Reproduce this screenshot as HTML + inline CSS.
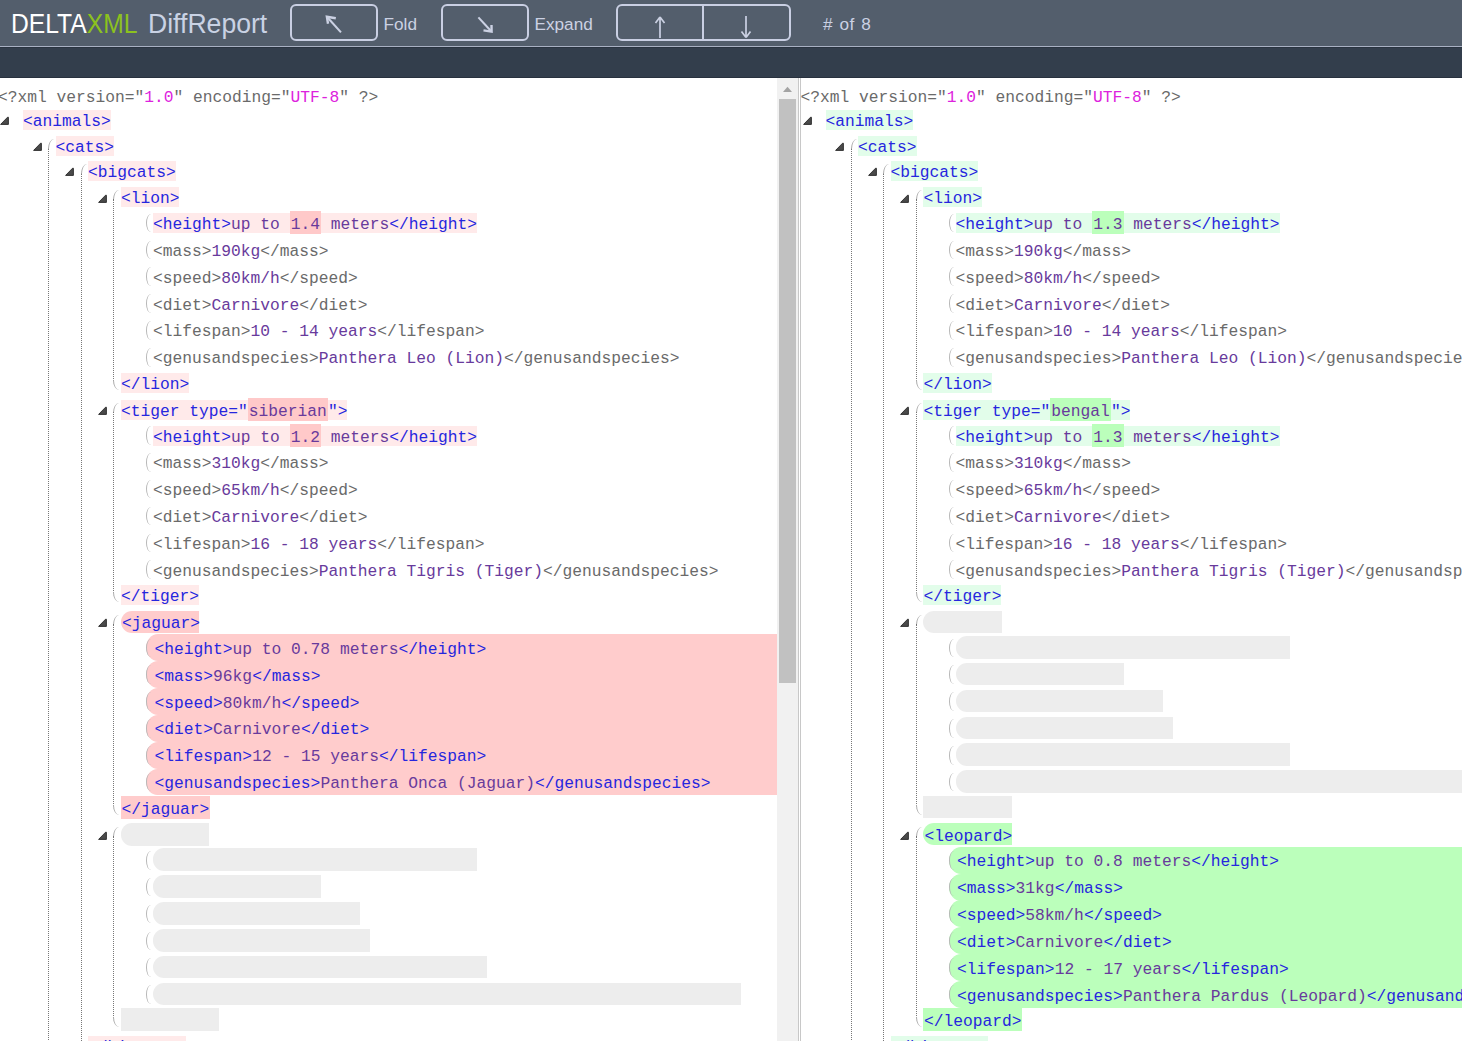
<!DOCTYPE html>
<html><head><meta charset="utf-8"><style>
html,body{margin:0;padding:0;background:#fff;}
body{width:1462px;height:1041px;overflow:hidden;position:relative;}
.hdr{position:absolute;left:0;top:0;width:1462px;height:46px;background:#535e6c;}
.hl{position:absolute;left:0;top:45.5px;width:1462px;height:1.3px;background:#a9b1c3;}
.bar{position:absolute;left:0;top:47px;width:1462px;height:31px;background:#333e4c;border-top:0.8px solid #2a3441;border-bottom:0.8px solid #28313e;box-sizing:border-box;}
.logo{position:absolute;font-family:"Liberation Sans",sans-serif;line-height:normal;white-space:pre;}
.btn{position:absolute;top:4px;height:37px;border:2px solid #c9cfe3;border-radius:6px;box-sizing:border-box;}
.lbl{position:absolute;top:14.3px;font-family:"Liberation Sans",sans-serif;font-size:17.2px;line-height:normal;color:#cbd1e3;white-space:pre;}
.pane{position:absolute;top:78px;height:963px;overflow:hidden;}
.r{position:absolute;}
.t{position:absolute;height:19.6px;line-height:23.05px;white-space:pre;font-family:"Liberation Mono",monospace;font-size:16.25px;color:#6a6a6a;}
.g{color:#6a6a6a}.b{color:#2626de}.p{color:#683a9c}.m{color:#dd22dd}
.hv{padding:0 1.15px;}
.tri{position:absolute;overflow:visible;}
.vl{position:absolute;width:0;border-left:1px dotted #777;}
.arc{position:absolute;width:5px;border-left:1px solid #b8b8b8;border-radius:5px 0 0 5px/9.25px 0 0 9.25px;box-sizing:border-box;}
.ptop{position:absolute;width:6px;height:10px;border-left:1px solid #a8a8a8;border-radius:6px 0 0 0/10px 0 0 0;box-sizing:border-box;}
.pbot{position:absolute;width:6px;height:10px;border-left:1px solid #a8a8a8;border-radius:0 0 0 6px/0 0 0 10px;box-sizing:border-box;}
</style></head><body>

<div class="hdr"></div><div class="hl"></div><div class="bar"></div>
<div class="logo" style="left:11px;top:8.81px;font-size:27.0px;transform:scaleX(0.913);transform-origin:0 0"><span style="color:#fff">DELTA</span><span style="color:#8cc21e">XML</span></div>
<div class="logo" style="left:147.5px;top:8.81px;font-size:27.0px;transform:scaleX(0.985);transform-origin:0 0;color:#c9d2e4">DiffReport</div>
<div class="btn" style="left:290px;width:88px"></div>
<svg style="position:absolute;left:324px;top:12px" width="20" height="22" viewBox="0 0 20 22"><path d="M3.3 5.2 L17 20.4" stroke="#cbd1e3" stroke-width="2.1" fill="none"/><path d="M11.8 6.3 L2.9 4.8 L4 11.8" stroke="#cbd1e3" stroke-width="2.4" fill="none" stroke-linejoin="miter"/></svg>
<div class="lbl" style="left:383.5px">Fold</div>
<div class="btn" style="left:441px;width:88px"></div>
<svg style="position:absolute;left:475px;top:12px" width="20" height="22" viewBox="0 0 20 22"><path d="M3.4 5.4 L16.2 19.2" stroke="#cbd1e3" stroke-width="2.1" fill="none"/><path d="M16.5 13 L16.6 19.6 L8.5 18.4" stroke="#cbd1e3" stroke-width="2.4" fill="none" stroke-linejoin="miter"/></svg>
<div class="lbl" style="left:534.5px">Expand</div>
<div class="btn" style="left:616px;width:175px"></div>
<div style="position:absolute;left:702px;top:5px;width:2px;height:35px;background:#c9cfe3"></div>
<svg style="position:absolute;left:650px;top:14px" width="20" height="26" viewBox="0 0 20 26"><path d="M10 3 L10 24 M10 3 L5.5 9 M10 3 L14.5 9" stroke="#cbd1e3" stroke-width="1.7" fill="none"/></svg>
<svg style="position:absolute;left:736px;top:14px" width="20" height="26" viewBox="0 0 20 26"><path d="M10 2 L10 23.5 M10 23.5 L5.5 17.5 M10 23.5 L14.5 17.5" stroke="#cbd1e3" stroke-width="1.7" fill="none"/></svg>
<div class="lbl" style="left:823px;word-spacing:1.6px;letter-spacing:0.3px"># of 8</div>

<div class="pane" style="left:0px;width:777px"><div style="position:absolute;left:0px;top:-78px;width:1462px;height:1041px"><div class="r" style="left:23.1px;top:109.95px;width:87.75px;height:20px;background:#ffeaea;"></div><div class="r" style="left:55.6px;top:136.2px;width:58.5px;height:20px;background:#ffeaea;"></div><div class="r" style="left:88.1px;top:161.25px;width:87.75px;height:20px;background:#ffeaea;"></div><div class="r" style="left:120.9px;top:187.43px;width:58.5px;height:20px;background:#ffeaea;"></div><div class="r" style="left:153px;top:213.12px;width:324.05px;height:20px;background:#ffeaea;"></div><div class="r" style="left:289.5px;top:211.12px;width:31.55px;height:23px;background:#ffc9c9;"></div><div class="r" style="left:120.9px;top:373.01px;width:68.25px;height:20px;background:#ffeaea;"></div><div class="r" style="left:120.9px;top:399.85px;width:226.55px;height:20px;background:#ffeaea;"></div><div class="r" style="left:247.65px;top:397.85px;width:80.3px;height:23px;background:#ffc9c9;"></div><div class="r" style="left:153px;top:425.54px;width:324.05px;height:20px;background:#ffeaea;"></div><div class="r" style="left:289.5px;top:423.54px;width:31.55px;height:23px;background:#ffc9c9;"></div><div class="r" style="left:120.9px;top:585.43px;width:78px;height:20px;background:#ffeaea;"></div><div class="r" style="left:120.9px;top:610.77px;width:78.5px;height:22.2px;background:#ffcccc;border-radius:11px 0 0 11px;"></div><div class="r" style="left:146.1px;top:634.36px;width:630.9px;height:26.9px;background:#ffcccc;border-radius:12px 0 0 12px/13.5px 0 0 13.5px;"></div><div class="r" style="left:146.1px;top:661.2px;width:630.9px;height:26.9px;background:#ffcccc;border-radius:12px 0 0 12px/13.5px 0 0 13.5px;"></div><div class="r" style="left:146.1px;top:688.04px;width:630.9px;height:26.9px;background:#ffcccc;border-radius:12px 0 0 12px/13.5px 0 0 13.5px;"></div><div class="r" style="left:146.1px;top:714.88px;width:630.9px;height:26.9px;background:#ffcccc;border-radius:12px 0 0 12px/13.5px 0 0 13.5px;"></div><div class="r" style="left:146.1px;top:741.72px;width:630.9px;height:26.9px;background:#ffcccc;border-radius:12px 0 0 12px/13.5px 0 0 13.5px;"></div><div class="r" style="left:146.1px;top:768.56px;width:630.9px;height:26.9px;background:#ffcccc;border-radius:12px 0 0 12px/13.5px 0 0 13.5px;"></div><div class="r" style="left:120.9px;top:795.85px;width:88.75px;height:23px;background:#ffcccc;"></div><div class="r" style="left:120.7px;top:823.09px;width:88.75px;height:22.6px;background:#ededed;border-radius:11px 0 0 11px;"></div><div class="r" style="left:153.4px;top:848.48px;width:324.05px;height:22.5px;background:#ededed;border-radius:11px 0 0 11px;"></div><div class="r" style="left:153.4px;top:875.32px;width:168.05px;height:22.5px;background:#ededed;border-radius:11px 0 0 11px;"></div><div class="r" style="left:153.4px;top:902.16px;width:207.05px;height:22.5px;background:#ededed;border-radius:11px 0 0 11px;"></div><div class="r" style="left:153.4px;top:929px;width:216.8px;height:22.5px;background:#ededed;border-radius:11px 0 0 11px;"></div><div class="r" style="left:153.4px;top:955.84px;width:333.8px;height:22.5px;background:#ededed;border-radius:11px 0 0 11px;"></div><div class="r" style="left:153.4px;top:982.68px;width:587.3px;height:22.5px;background:#ededed;border-radius:11px 0 0 11px;"></div><div class="r" style="left:120.8px;top:1008.27px;width:98.3px;height:22.4px;background:#ededed;"></div><div class="r" style="left:88.1px;top:1035.77px;width:97.5px;height:20px;background:#ffeaea;"></div><svg class="tri" style="left:0.1px;top:116.15px" width="9" height="9" viewBox="0 0 9 9"><path d="M0.6 8.4 L7.6 1.2 Q8.4 0.6 8.4 1.6 L8.4 8.4 Z" fill="#4a4a4a" stroke="#262626" stroke-width="0.9" stroke-linejoin="round"/></svg><svg class="tri" style="left:32.6px;top:142.4px" width="9" height="9" viewBox="0 0 9 9"><path d="M0.6 8.4 L7.6 1.2 Q8.4 0.6 8.4 1.6 L8.4 8.4 Z" fill="#4a4a4a" stroke="#262626" stroke-width="0.9" stroke-linejoin="round"/></svg><svg class="tri" style="left:65.1px;top:167.45px" width="9" height="9" viewBox="0 0 9 9"><path d="M0.6 8.4 L7.6 1.2 Q8.4 0.6 8.4 1.6 L8.4 8.4 Z" fill="#4a4a4a" stroke="#262626" stroke-width="0.9" stroke-linejoin="round"/></svg><div class="vl" style="left:48.2px;top:147.9px;height:1100px"></div><div class="vl" style="left:80.7px;top:172.95px;height:1100px"></div><div class="ptop" style="left:48.2px;top:138.9px"></div><div class="ptop" style="left:80.7px;top:163.95px"></div><svg class="tri" style="left:97.9px;top:193.63px" width="9" height="9" viewBox="0 0 9 9"><path d="M0.6 8.4 L7.6 1.2 Q8.4 0.6 8.4 1.6 L8.4 8.4 Z" fill="#4a4a4a" stroke="#262626" stroke-width="0.9" stroke-linejoin="round"/></svg><div class="arc" style="left:146.2px;top:213.72px;height:18.6px"></div><div class="arc" style="left:146.2px;top:240.56px;height:18.6px"></div><div class="arc" style="left:146.2px;top:267.4px;height:18.6px"></div><div class="arc" style="left:146.2px;top:294.24px;height:18.6px"></div><div class="arc" style="left:146.2px;top:321.08px;height:18.6px"></div><div class="arc" style="left:146.2px;top:347.92px;height:18.6px"></div><div class="ptop" style="left:113px;top:190.13px"></div><div class="vl" style="left:113px;top:199.13px;height:181.68px"></div><div class="pbot" style="left:113px;top:379.81px"></div><svg class="tri" style="left:97.9px;top:406.05px" width="9" height="9" viewBox="0 0 9 9"><path d="M0.6 8.4 L7.6 1.2 Q8.4 0.6 8.4 1.6 L8.4 8.4 Z" fill="#4a4a4a" stroke="#262626" stroke-width="0.9" stroke-linejoin="round"/></svg><div class="arc" style="left:146.2px;top:426.14px;height:18.6px"></div><div class="arc" style="left:146.2px;top:452.98px;height:18.6px"></div><div class="arc" style="left:146.2px;top:479.82px;height:18.6px"></div><div class="arc" style="left:146.2px;top:506.66px;height:18.6px"></div><div class="arc" style="left:146.2px;top:533.5px;height:18.6px"></div><div class="arc" style="left:146.2px;top:560.34px;height:18.6px"></div><div class="ptop" style="left:113px;top:402.55px"></div><div class="vl" style="left:113px;top:411.55px;height:181.68px"></div><div class="pbot" style="left:113px;top:592.23px"></div><svg class="tri" style="left:97.9px;top:618.47px" width="9" height="9" viewBox="0 0 9 9"><path d="M0.6 8.4 L7.6 1.2 Q8.4 0.6 8.4 1.6 L8.4 8.4 Z" fill="#4a4a4a" stroke="#262626" stroke-width="0.9" stroke-linejoin="round"/></svg><div class="arc" style="left:146.2px;top:638.56px;height:18.6px"></div><div class="arc" style="left:146.2px;top:665.4px;height:18.6px"></div><div class="arc" style="left:146.2px;top:692.24px;height:18.6px"></div><div class="arc" style="left:146.2px;top:719.08px;height:18.6px"></div><div class="arc" style="left:146.2px;top:745.92px;height:18.6px"></div><div class="arc" style="left:146.2px;top:772.76px;height:18.6px"></div><div class="ptop" style="left:113px;top:614.97px"></div><div class="vl" style="left:113px;top:623.97px;height:181.68px"></div><div class="pbot" style="left:113px;top:804.65px"></div><svg class="tri" style="left:97.9px;top:830.89px" width="9" height="9" viewBox="0 0 9 9"><path d="M0.6 8.4 L7.6 1.2 Q8.4 0.6 8.4 1.6 L8.4 8.4 Z" fill="#4a4a4a" stroke="#262626" stroke-width="0.9" stroke-linejoin="round"/></svg><div class="arc" style="left:146.2px;top:850.98px;height:18.6px"></div><div class="arc" style="left:146.2px;top:877.82px;height:18.6px"></div><div class="arc" style="left:146.2px;top:904.66px;height:18.6px"></div><div class="arc" style="left:146.2px;top:931.5px;height:18.6px"></div><div class="arc" style="left:146.2px;top:958.34px;height:18.6px"></div><div class="arc" style="left:146.2px;top:985.18px;height:18.6px"></div><div class="ptop" style="left:113px;top:827.39px"></div><div class="vl" style="left:113px;top:836.39px;height:181.68px"></div><div class="pbot" style="left:113px;top:1017.07px"></div><div class="t" style="left:-2.1px;top:86px"><span class="g">&lt;?xml version=&quot;</span><span class="m">1.0</span><span class="g">&quot; encoding=&quot;</span><span class="m">UTF-8</span><span class="g">&quot; ?&gt;</span></div><div class="t" style="left:23.1px;top:109.95px"><span class="b">&lt;animals&gt;</span></div><div class="t" style="left:55.6px;top:136.2px"><span class="b">&lt;cats&gt;</span></div><div class="t" style="left:88.1px;top:161.25px"><span class="b">&lt;bigcats&gt;</span></div><div class="t" style="left:120.9px;top:187.43px"><span class="b">&lt;lion&gt;</span></div><div class="t" style="left:153px;top:213.12px"><span class="b">&lt;height&gt;</span><span class="p">up to </span><span class="p hv">1.4</span><span class="p"> meters</span><span class="b">&lt;/height&gt;</span></div><div class="t" style="left:153px;top:239.96px"><span class="g">&lt;mass&gt;</span><span class="p">190kg</span><span class="g">&lt;/mass&gt;</span></div><div class="t" style="left:153px;top:266.8px"><span class="g">&lt;speed&gt;</span><span class="p">80km/h</span><span class="g">&lt;/speed&gt;</span></div><div class="t" style="left:153px;top:293.64px"><span class="g">&lt;diet&gt;</span><span class="p">Carnivore</span><span class="g">&lt;/diet&gt;</span></div><div class="t" style="left:153px;top:320.48px"><span class="g">&lt;lifespan&gt;</span><span class="p">10 - 14 years</span><span class="g">&lt;/lifespan&gt;</span></div><div class="t" style="left:153px;top:347.32px"><span class="g">&lt;genusandspecies&gt;</span><span class="p">Panthera Leo (Lion)</span><span class="g">&lt;/genusandspecies&gt;</span></div><div class="t" style="left:120.9px;top:373.01px"><span class="b">&lt;/lion&gt;</span></div><div class="t" style="left:120.9px;top:399.85px"><span class="b">&lt;tiger type="</span><span class="p hv">siberian</span><span class="b">"&gt;</span></div><div class="t" style="left:153px;top:425.54px"><span class="b">&lt;height&gt;</span><span class="p">up to </span><span class="p hv">1.2</span><span class="p"> meters</span><span class="b">&lt;/height&gt;</span></div><div class="t" style="left:153px;top:452.38px"><span class="g">&lt;mass&gt;</span><span class="p">310kg</span><span class="g">&lt;/mass&gt;</span></div><div class="t" style="left:153px;top:479.22px"><span class="g">&lt;speed&gt;</span><span class="p">65km/h</span><span class="g">&lt;/speed&gt;</span></div><div class="t" style="left:153px;top:506.06px"><span class="g">&lt;diet&gt;</span><span class="p">Carnivore</span><span class="g">&lt;/diet&gt;</span></div><div class="t" style="left:153px;top:532.9px"><span class="g">&lt;lifespan&gt;</span><span class="p">16 - 18 years</span><span class="g">&lt;/lifespan&gt;</span></div><div class="t" style="left:153px;top:559.74px"><span class="g">&lt;genusandspecies&gt;</span><span class="p">Panthera Tigris (Tiger)</span><span class="g">&lt;/genusandspecies&gt;</span></div><div class="t" style="left:120.9px;top:585.43px"><span class="b">&lt;/tiger&gt;</span></div><div class="t" style="left:121.9px;top:612.27px"><span class="b">&lt;jaguar&gt;</span></div><div class="t" style="left:154.6px;top:637.96px"><span class="b">&lt;height&gt;</span><span class="p">up to 0.78 meters</span><span class="b">&lt;/height&gt;</span></div><div class="t" style="left:154.6px;top:664.8px"><span class="b">&lt;mass&gt;</span><span class="p">96kg</span><span class="b">&lt;/mass&gt;</span></div><div class="t" style="left:154.6px;top:691.64px"><span class="b">&lt;speed&gt;</span><span class="p">80km/h</span><span class="b">&lt;/speed&gt;</span></div><div class="t" style="left:154.6px;top:718.48px"><span class="b">&lt;diet&gt;</span><span class="p">Carnivore</span><span class="b">&lt;/diet&gt;</span></div><div class="t" style="left:154.6px;top:745.32px"><span class="b">&lt;lifespan&gt;</span><span class="p">12 - 15 years</span><span class="b">&lt;/lifespan&gt;</span></div><div class="t" style="left:154.6px;top:772.16px"><span class="b">&lt;genusandspecies&gt;</span><span class="p">Panthera Onca (Jaguar)</span><span class="b">&lt;/genusandspecies&gt;</span></div><div class="t" style="left:121.4px;top:797.85px"><span class="b">&lt;/jaguar&gt;</span></div><div class="t" style="left:88.1px;top:1035.77px"><span class="b">&lt;/bigcats&gt;</span></div></div></div>

<div class="r" style="left:777px;top:78px;width:21px;height:963px;background:#f1f1f1"></div>
<div class="r" style="left:779px;top:99px;width:17px;height:584px;background:#c1c1c1"></div>
<svg style="position:absolute;left:782px;top:85px" width="11" height="8" viewBox="0 0 11 8"><path d="M1 7 L5.5 1.8 L10 7 Z" fill="#a3a3a3"/></svg>
<div class="r" style="left:798px;top:78px;width:1px;height:963px;background:#c8c8c8"></div>
<div class="r" style="left:800px;top:78px;width:1px;height:963px;background:#c8c8c8"></div>

<div class="pane" style="left:801px;width:661px"><div style="position:absolute;left:-801px;top:-78px;width:1462px;height:1041px"><div class="r" style="left:825.6px;top:109.95px;width:87.75px;height:20px;background:#e2fdea;"></div><div class="r" style="left:858.1px;top:136.2px;width:58.5px;height:20px;background:#e2fdea;"></div><div class="r" style="left:890.6px;top:161.25px;width:87.75px;height:20px;background:#e2fdea;"></div><div class="r" style="left:923.4px;top:187.43px;width:58.5px;height:20px;background:#e2fdea;"></div><div class="r" style="left:955.5px;top:213.12px;width:324.05px;height:20px;background:#e2fdea;"></div><div class="r" style="left:1092px;top:211.12px;width:31.55px;height:23px;background:#bbffbb;"></div><div class="r" style="left:923.4px;top:373.01px;width:68.25px;height:20px;background:#e2fdea;"></div><div class="r" style="left:923.4px;top:399.85px;width:207.05px;height:20px;background:#e2fdea;"></div><div class="r" style="left:1050.15px;top:397.85px;width:60.8px;height:23px;background:#bbffbb;"></div><div class="r" style="left:955.5px;top:425.54px;width:324.05px;height:20px;background:#e2fdea;"></div><div class="r" style="left:1092px;top:423.54px;width:31.55px;height:23px;background:#bbffbb;"></div><div class="r" style="left:923.4px;top:585.43px;width:78px;height:20px;background:#e2fdea;"></div><div class="r" style="left:923.2px;top:610.67px;width:79px;height:22.6px;background:#ededed;border-radius:11px 0 0 11px;"></div><div class="r" style="left:955.9px;top:636.06px;width:333.8px;height:22.5px;background:#ededed;border-radius:11px 0 0 11px;"></div><div class="r" style="left:955.9px;top:662.9px;width:168.05px;height:22.5px;background:#ededed;border-radius:11px 0 0 11px;"></div><div class="r" style="left:955.9px;top:689.74px;width:207.05px;height:22.5px;background:#ededed;border-radius:11px 0 0 11px;"></div><div class="r" style="left:955.9px;top:716.58px;width:216.8px;height:22.5px;background:#ededed;border-radius:11px 0 0 11px;"></div><div class="r" style="left:955.9px;top:743.42px;width:333.8px;height:22.5px;background:#ededed;border-radius:11px 0 0 11px;"></div><div class="r" style="left:955.9px;top:770.26px;width:558.05px;height:22.5px;background:#ededed;border-radius:11px 0 0 11px;"></div><div class="r" style="left:923.3px;top:795.85px;width:88.55px;height:22.4px;background:#ededed;"></div><div class="r" style="left:923.4px;top:823.19px;width:88.25px;height:22.2px;background:#bbffbb;border-radius:11px 0 0 11px;"></div><div class="r" style="left:948.6px;top:846.78px;width:521.4px;height:26.9px;background:#bbffbb;border-radius:12px 0 0 12px/13.5px 0 0 13.5px;"></div><div class="r" style="left:948.6px;top:873.62px;width:521.4px;height:26.9px;background:#bbffbb;border-radius:12px 0 0 12px/13.5px 0 0 13.5px;"></div><div class="r" style="left:948.6px;top:900.46px;width:521.4px;height:26.9px;background:#bbffbb;border-radius:12px 0 0 12px/13.5px 0 0 13.5px;"></div><div class="r" style="left:948.6px;top:927.3px;width:521.4px;height:26.9px;background:#bbffbb;border-radius:12px 0 0 12px/13.5px 0 0 13.5px;"></div><div class="r" style="left:948.6px;top:954.14px;width:521.4px;height:26.9px;background:#bbffbb;border-radius:12px 0 0 12px/13.5px 0 0 13.5px;"></div><div class="r" style="left:948.6px;top:980.98px;width:521.4px;height:26.9px;background:#bbffbb;border-radius:12px 0 0 12px/13.5px 0 0 13.5px;"></div><div class="r" style="left:923.4px;top:1008.27px;width:98.5px;height:23px;background:#bbffbb;"></div><div class="r" style="left:890.6px;top:1035.77px;width:97.5px;height:20px;background:#e2fdea;"></div><svg class="tri" style="left:802.6px;top:116.15px" width="9" height="9" viewBox="0 0 9 9"><path d="M0.6 8.4 L7.6 1.2 Q8.4 0.6 8.4 1.6 L8.4 8.4 Z" fill="#4a4a4a" stroke="#262626" stroke-width="0.9" stroke-linejoin="round"/></svg><svg class="tri" style="left:835.1px;top:142.4px" width="9" height="9" viewBox="0 0 9 9"><path d="M0.6 8.4 L7.6 1.2 Q8.4 0.6 8.4 1.6 L8.4 8.4 Z" fill="#4a4a4a" stroke="#262626" stroke-width="0.9" stroke-linejoin="round"/></svg><svg class="tri" style="left:867.6px;top:167.45px" width="9" height="9" viewBox="0 0 9 9"><path d="M0.6 8.4 L7.6 1.2 Q8.4 0.6 8.4 1.6 L8.4 8.4 Z" fill="#4a4a4a" stroke="#262626" stroke-width="0.9" stroke-linejoin="round"/></svg><div class="vl" style="left:850.7px;top:147.9px;height:1100px"></div><div class="vl" style="left:883.2px;top:172.95px;height:1100px"></div><div class="ptop" style="left:850.7px;top:138.9px"></div><div class="ptop" style="left:883.2px;top:163.95px"></div><svg class="tri" style="left:900.4px;top:193.63px" width="9" height="9" viewBox="0 0 9 9"><path d="M0.6 8.4 L7.6 1.2 Q8.4 0.6 8.4 1.6 L8.4 8.4 Z" fill="#4a4a4a" stroke="#262626" stroke-width="0.9" stroke-linejoin="round"/></svg><div class="arc" style="left:948.7px;top:213.72px;height:18.6px"></div><div class="arc" style="left:948.7px;top:240.56px;height:18.6px"></div><div class="arc" style="left:948.7px;top:267.4px;height:18.6px"></div><div class="arc" style="left:948.7px;top:294.24px;height:18.6px"></div><div class="arc" style="left:948.7px;top:321.08px;height:18.6px"></div><div class="arc" style="left:948.7px;top:347.92px;height:18.6px"></div><div class="ptop" style="left:915.5px;top:190.13px"></div><div class="vl" style="left:915.5px;top:199.13px;height:181.68px"></div><div class="pbot" style="left:915.5px;top:379.81px"></div><svg class="tri" style="left:900.4px;top:406.05px" width="9" height="9" viewBox="0 0 9 9"><path d="M0.6 8.4 L7.6 1.2 Q8.4 0.6 8.4 1.6 L8.4 8.4 Z" fill="#4a4a4a" stroke="#262626" stroke-width="0.9" stroke-linejoin="round"/></svg><div class="arc" style="left:948.7px;top:426.14px;height:18.6px"></div><div class="arc" style="left:948.7px;top:452.98px;height:18.6px"></div><div class="arc" style="left:948.7px;top:479.82px;height:18.6px"></div><div class="arc" style="left:948.7px;top:506.66px;height:18.6px"></div><div class="arc" style="left:948.7px;top:533.5px;height:18.6px"></div><div class="arc" style="left:948.7px;top:560.34px;height:18.6px"></div><div class="ptop" style="left:915.5px;top:402.55px"></div><div class="vl" style="left:915.5px;top:411.55px;height:181.68px"></div><div class="pbot" style="left:915.5px;top:592.23px"></div><svg class="tri" style="left:900.4px;top:618.47px" width="9" height="9" viewBox="0 0 9 9"><path d="M0.6 8.4 L7.6 1.2 Q8.4 0.6 8.4 1.6 L8.4 8.4 Z" fill="#4a4a4a" stroke="#262626" stroke-width="0.9" stroke-linejoin="round"/></svg><div class="arc" style="left:948.7px;top:638.56px;height:18.6px"></div><div class="arc" style="left:948.7px;top:665.4px;height:18.6px"></div><div class="arc" style="left:948.7px;top:692.24px;height:18.6px"></div><div class="arc" style="left:948.7px;top:719.08px;height:18.6px"></div><div class="arc" style="left:948.7px;top:745.92px;height:18.6px"></div><div class="arc" style="left:948.7px;top:772.76px;height:18.6px"></div><div class="ptop" style="left:915.5px;top:614.97px"></div><div class="vl" style="left:915.5px;top:623.97px;height:181.68px"></div><div class="pbot" style="left:915.5px;top:804.65px"></div><svg class="tri" style="left:900.4px;top:830.89px" width="9" height="9" viewBox="0 0 9 9"><path d="M0.6 8.4 L7.6 1.2 Q8.4 0.6 8.4 1.6 L8.4 8.4 Z" fill="#4a4a4a" stroke="#262626" stroke-width="0.9" stroke-linejoin="round"/></svg><div class="arc" style="left:948.7px;top:850.98px;height:18.6px"></div><div class="arc" style="left:948.7px;top:877.82px;height:18.6px"></div><div class="arc" style="left:948.7px;top:904.66px;height:18.6px"></div><div class="arc" style="left:948.7px;top:931.5px;height:18.6px"></div><div class="arc" style="left:948.7px;top:958.34px;height:18.6px"></div><div class="arc" style="left:948.7px;top:985.18px;height:18.6px"></div><div class="ptop" style="left:915.5px;top:827.39px"></div><div class="vl" style="left:915.5px;top:836.39px;height:181.68px"></div><div class="pbot" style="left:915.5px;top:1017.07px"></div><div class="t" style="left:800.4px;top:86px"><span class="g">&lt;?xml version=&quot;</span><span class="m">1.0</span><span class="g">&quot; encoding=&quot;</span><span class="m">UTF-8</span><span class="g">&quot; ?&gt;</span></div><div class="t" style="left:825.6px;top:109.95px"><span class="b">&lt;animals&gt;</span></div><div class="t" style="left:858.1px;top:136.2px"><span class="b">&lt;cats&gt;</span></div><div class="t" style="left:890.6px;top:161.25px"><span class="b">&lt;bigcats&gt;</span></div><div class="t" style="left:923.4px;top:187.43px"><span class="b">&lt;lion&gt;</span></div><div class="t" style="left:955.5px;top:213.12px"><span class="b">&lt;height&gt;</span><span class="p">up to </span><span class="p hv">1.3</span><span class="p"> meters</span><span class="b">&lt;/height&gt;</span></div><div class="t" style="left:955.5px;top:239.96px"><span class="g">&lt;mass&gt;</span><span class="p">190kg</span><span class="g">&lt;/mass&gt;</span></div><div class="t" style="left:955.5px;top:266.8px"><span class="g">&lt;speed&gt;</span><span class="p">80km/h</span><span class="g">&lt;/speed&gt;</span></div><div class="t" style="left:955.5px;top:293.64px"><span class="g">&lt;diet&gt;</span><span class="p">Carnivore</span><span class="g">&lt;/diet&gt;</span></div><div class="t" style="left:955.5px;top:320.48px"><span class="g">&lt;lifespan&gt;</span><span class="p">10 - 14 years</span><span class="g">&lt;/lifespan&gt;</span></div><div class="t" style="left:955.5px;top:347.32px"><span class="g">&lt;genusandspecies&gt;</span><span class="p">Panthera Leo (Lion)</span><span class="g">&lt;/genusandspecies&gt;</span></div><div class="t" style="left:923.4px;top:373.01px"><span class="b">&lt;/lion&gt;</span></div><div class="t" style="left:923.4px;top:399.85px"><span class="b">&lt;tiger type="</span><span class="p hv">bengal</span><span class="b">"&gt;</span></div><div class="t" style="left:955.5px;top:425.54px"><span class="b">&lt;height&gt;</span><span class="p">up to </span><span class="p hv">1.3</span><span class="p"> meters</span><span class="b">&lt;/height&gt;</span></div><div class="t" style="left:955.5px;top:452.38px"><span class="g">&lt;mass&gt;</span><span class="p">310kg</span><span class="g">&lt;/mass&gt;</span></div><div class="t" style="left:955.5px;top:479.22px"><span class="g">&lt;speed&gt;</span><span class="p">65km/h</span><span class="g">&lt;/speed&gt;</span></div><div class="t" style="left:955.5px;top:506.06px"><span class="g">&lt;diet&gt;</span><span class="p">Carnivore</span><span class="g">&lt;/diet&gt;</span></div><div class="t" style="left:955.5px;top:532.9px"><span class="g">&lt;lifespan&gt;</span><span class="p">16 - 18 years</span><span class="g">&lt;/lifespan&gt;</span></div><div class="t" style="left:955.5px;top:559.74px"><span class="g">&lt;genusandspecies&gt;</span><span class="p">Panthera Tigris (Tiger)</span><span class="g">&lt;/genusandspecies&gt;</span></div><div class="t" style="left:923.4px;top:585.43px"><span class="b">&lt;/tiger&gt;</span></div><div class="t" style="left:924.4px;top:824.69px"><span class="b">&lt;leopard&gt;</span></div><div class="t" style="left:957.1px;top:850.38px"><span class="b">&lt;height&gt;</span><span class="p">up to 0.8 meters</span><span class="b">&lt;/height&gt;</span></div><div class="t" style="left:957.1px;top:877.22px"><span class="b">&lt;mass&gt;</span><span class="p">31kg</span><span class="b">&lt;/mass&gt;</span></div><div class="t" style="left:957.1px;top:904.06px"><span class="b">&lt;speed&gt;</span><span class="p">58km/h</span><span class="b">&lt;/speed&gt;</span></div><div class="t" style="left:957.1px;top:930.9px"><span class="b">&lt;diet&gt;</span><span class="p">Carnivore</span><span class="b">&lt;/diet&gt;</span></div><div class="t" style="left:957.1px;top:957.74px"><span class="b">&lt;lifespan&gt;</span><span class="p">12 - 17 years</span><span class="b">&lt;/lifespan&gt;</span></div><div class="t" style="left:957.1px;top:984.58px"><span class="b">&lt;genusandspecies&gt;</span><span class="p">Panthera Pardus (Leopard)</span><span class="b">&lt;/genusandspecies&gt;</span></div><div class="t" style="left:923.9px;top:1010.27px"><span class="b">&lt;/leopard&gt;</span></div><div class="t" style="left:890.6px;top:1035.77px"><span class="b">&lt;/bigcats&gt;</span></div></div></div>
</body></html>
